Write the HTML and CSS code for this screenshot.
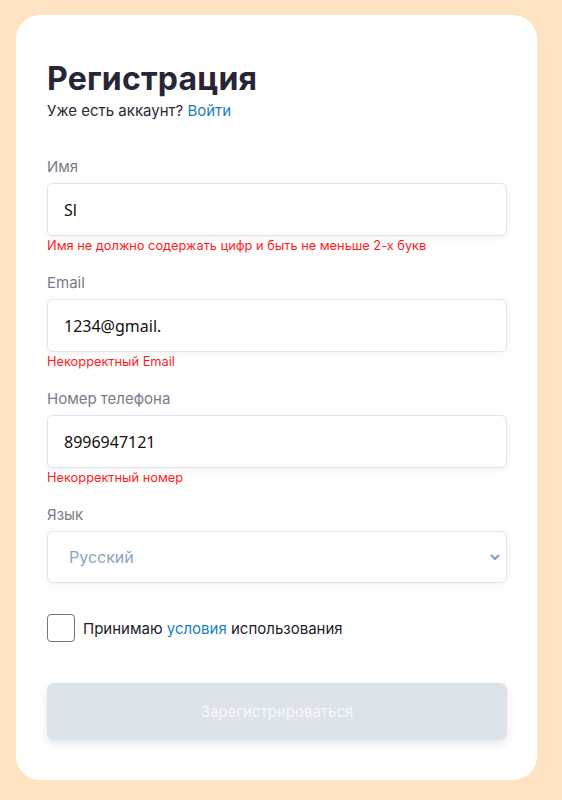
FILE: index.html
```html
<!DOCTYPE html>
<html lang="ru">
<head>
<meta charset="utf-8">
<title>Регистрация</title>
<link rel="stylesheet" href="styles.css">
</head>
<body>
<div class="card">
  <h1 class="title">Регистрация</h1>
  <p class="sub">Уже есть аккаунт? <a href="#" class="link">Войти</a></p>

  <div class="field">
    <label class="label">Имя</label>
    <input class="input" type="text" value="Sl">
    <div class="error">Имя не должно содержать цифр и быть не меньше 2-х букв</div>
  </div>

  <div class="field">
    <label class="label">Email</label>
    <input class="input" type="text" value="1234@gmail.">
    <div class="error">Некорректный Email</div>
  </div>

  <div class="field">
    <label class="label">Номер телефона</label>
    <input class="input" type="text" value="8996947121">
    <div class="error">Некорректный номер</div>
  </div>

  <div class="field">
    <label class="label">Язык</label>
    <div class="select">
      <span class="select-text">Русский</span>
      <svg class="chev" width="10" height="7" viewBox="0 0 10 7"><path d="M1.5 1.5 L5 5 L8.5 1.5" fill="none" stroke="#7f9cc4" stroke-width="2" stroke-linecap="round" stroke-linejoin="round"/></svg>
    </div>
  </div>

  <div class="agree">
    <span class="box"></span>
    <span class="agree-text">Принимаю <a href="#" class="link">условия</a> использования</span>
  </div>

  <button class="btn">Зарегистрироваться</button>
</div>
</body>
</html>
```
FILE: styles.css
```css
html, body {
  margin: 0;
  padding: 0;
}
body {
  background: #fee3c3;
  font-family: "Inter", "Noto Sans", sans-serif;
  min-height: 800px;
  padding: 15px 25px 21px 16px;
  box-sizing: border-box;
}
.card {
  background: #fff;
  border-radius: 24px;
  padding: 44px 30px 40px 31px;
  width: 521px;
  box-sizing: border-box;
  display: flex;
  flex-direction: column;
}
.title {
  margin: 0;
  font-size: 32px;
  font-weight: 700;
  color: #272536;
  line-height: 40px;
  letter-spacing: 0.2px;
}
.sub {
  margin: 2px 0 0;
  font-size: 15px;
  color: #2b2a36;
  line-height: 20px;
}
.link {
  color: #1a7fbd;
  text-decoration: none;
}
.field {
  display: flex;
  flex-direction: column;
  margin-top: 36px;
}
.field + .field {
  margin-top: 18px;
}
.label {
  font-size: 15px;
  color: #7b7a88;
  line-height: 20px;
  margin-bottom: 6px;
}
.input, .select {
  height: 53px;
  box-sizing: border-box;
  border: 1px solid #dfe4ee;
  border-radius: 6px;
  box-shadow: 0 2px 6px rgba(150, 160, 180, 0.12);
  background: #fff;
}
.input {
  font-family: "Noto Sans", sans-serif;
  font-size: 16px;
  color: #111;
  padding: 0 16px;
  outline: none;
}
.error {
  font-size: 12.8px;
  color: #ff1a1a;
  line-height: 18px;
  margin-top: 1px;
}
.select {
  height: 52px;
  display: flex;
  align-items: center;
  justify-content: space-between;
  padding: 0 6px 0 21px;
}
.select-text {
  font-size: 16px;
  color: #8aa4c7;
}
.agree {
  display: flex;
  align-items: center;
  gap: 8px;
  margin-top: 31px;
}
.box {
  width: 28px;
  height: 28px;
  box-sizing: border-box;
  border: 1px solid #767676;
  border-radius: 4px;
  background: #fff;
}
.agree-text {
  font-size: 15px;
  color: #1d1c28;
}
.btn {
  margin-top: 41px;
  height: 57px;
  border: none;
  border-radius: 7px;
  background: #dde3eb;
  color: #f6f8fb;
  font-family: "Inter", "Noto Sans", sans-serif;
  font-size: 15px;
  box-shadow: 0 4px 10px rgba(150, 160, 180, 0.25);
}
```
